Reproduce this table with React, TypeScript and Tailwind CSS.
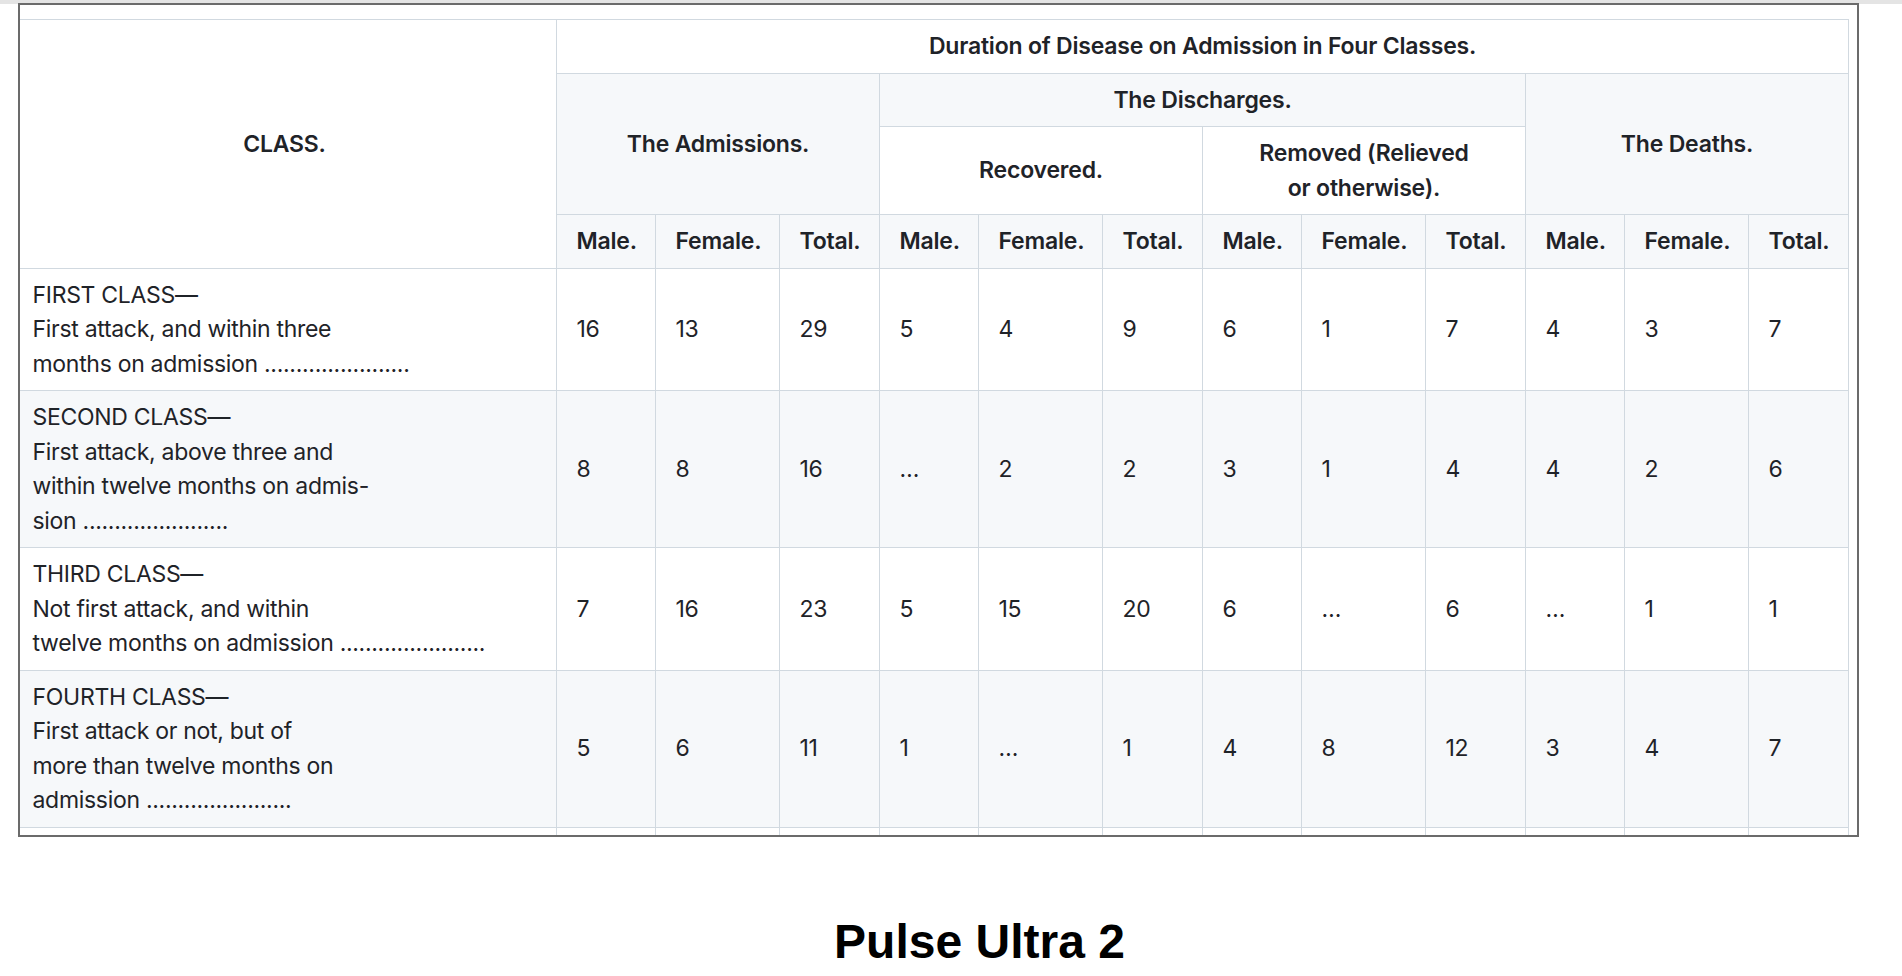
import React from "react";

type Row = {
	lines: string[];
	vals: string[];
	shaded: boolean;
};

const DOTS = ".......................";

const ROWS: Row[] = [
	{
		lines: ["FIRST CLASS—", "First attack, and within three", `months on admission ${DOTS}`],
		vals: ["16", "13", "29", "5", "4", "9", "6", "1", "7", "4", "3", "7"],
		shaded: false,
	},
	{
		lines: ["SECOND CLASS—", "First attack, above three and", "within twelve months on admis-", `sion ${DOTS}`],
		vals: ["8", "8", "16", "…", "2", "2", "3", "1", "4", "4", "2", "6"],
		shaded: true,
	},
	{
		lines: ["THIRD CLASS—", "Not first attack, and within", `twelve months on admission ${DOTS}`],
		vals: ["7", "16", "23", "5", "15", "20", "6", "…", "6", "…", "1", "1"],
		shaded: false,
	},
	{
		lines: ["FOURTH CLASS—", "First attack or not, but of", "more than twelve months on", `admission ${DOTS}`],
		vals: ["5", "6", "11", "1", "…", "1", "4", "8", "12", "3", "4", "7"],
		shaded: true,
	},
];

const cell = "border border-[#d1d9e0] px-[19.5px] py-[9px]";
const head = `${cell} font-semibold text-center tracking-[-0.2px]`;
const body = `${cell} whitespace-nowrap tracking-[-0.3px]`;
const SUB = ["Male.", "Female.", "Total."];

export default function App()
{
	return (
		<div
			className="w-[1902px] h-[976px] bg-white text-[#1f2328] overflow-hidden"
			style={{ fontFamily: "Inter, 'Liberation Sans', sans-serif" }}
		>
			<div className="h-[4px] bg-[#e4e4e4]" />
			<div className="ml-[18px] w-[1841px] h-[834px] -mt-[1px] border-2 border-[#6b6b6b] overflow-hidden bg-white">
				<div className="pt-[14px] -ml-[8px]">
					<table className="table-fixed border-collapse w-[1836px] text-[23px] leading-[34.5px]">
						<colgroup>
							<col className="w-[544px]" />
							{[0, 1, 2, 3].map((g) => (
								<React.Fragment key={g}>
									<col className="w-[99px]" />
									<col className="w-[124px]" />
									<col className="w-[100px]" />
								</React.Fragment>
							))}
						</colgroup>
						<thead>
							<tr className="bg-white">
								<th rowSpan={4} className={head}>CLASS.</th>
								<th colSpan={12} className={head}>Duration of Disease on Admission in Four Classes.</th>
							</tr>
							<tr className="bg-[#f6f8fa]">
								<th colSpan={3} rowSpan={2} className={head}>The Admissions.</th>
								<th colSpan={6} className={head}>The Discharges.</th>
								<th colSpan={3} rowSpan={2} className={head}>The Deaths.</th>
							</tr>
							<tr className="bg-white">
								<th colSpan={3} className={head}>Recovered.</th>
								<th colSpan={3} className={head}>
									Removed (Relieved
									<br />
									or otherwise).
								</th>
							</tr>
							<tr className="bg-[#f6f8fa]">
								{[0, 1, 2, 3].map((g) =>
									SUB.map((s) => (
										<th key={`${g}-${s}`} className={`${head} whitespace-nowrap`}>{s}</th>
									))
								)}
							</tr>
						</thead>
						<tbody>
							{ROWS.map((row, i) => (
								<tr key={i} className={row.shaded ? "bg-[#f6f8fa]" : "bg-white"}>
									<td className={body}>
										{row.lines.map((line, j) => (
											<div key={j}>{line}</div>
										))}
									</td>
									{row.vals.map((v, j) => (
										<td key={j} className={body}>{v}</td>
									))}
								</tr>
							))}
							{/* next row continues below the scroll edge */}
							<tr className="bg-white h-[53px]">
								{Array.from({ length: 13 }).map((_, j) => (
									<td key={j} className={cell} />
								))}
							</tr>
						</tbody>
					</table>
				</div>
			</div>
			<div className="flex justify-center pl-[57px] pt-[81px]">
				<div
					className="text-[48px] font-bold text-black leading-none"
					style={{ fontFamily: "'Liberation Sans', Arial, sans-serif" }}
				>
					Pulse Ultra 2
				</div>
			</div>
		</div>
	);
}
